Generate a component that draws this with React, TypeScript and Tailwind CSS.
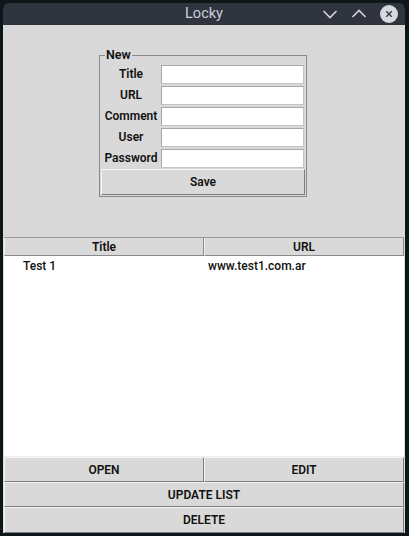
const fields = ["Title", "URL", "Comment", "User", "Password"];

const rows = [{ title: "Test 1", url: "www.test1.com.ar" }];

const raised =
  "bg-[#d9d9d9] border border-t-[#f4f4f4] border-l-[#f4f4f4] border-b-[#7d7d7d] border-r-[#7d7d7d]";

function Chevron({ up }: { up?: boolean }) {
  return (
    <svg width="16" height="16" viewBox="0 0 16 16" fill="none">
      <polyline
        points={up ? "1.5,11 8,4.5 14.5,11" : "1.5,5 8,11.5 14.5,5"}
        stroke="#d4d7dd"
        strokeWidth="1.6"
      />
    </svg>
  );
}

export default function App() {
  return (
    <div
      className="w-[409px] h-[536px] bg-[#0d1619] pt-[3px] px-[3px] overflow-hidden"
      style={{ fontFamily: "Roboto, 'Liberation Sans', sans-serif" }}
    >
      <div className="w-[402px] h-[530px] flex flex-col">
        {/* title bar */}
        <div className="h-[22px] bg-[#2f343f] rounded-t-[6px] relative flex items-center justify-center">
          <span className="text-[14.5px] text-[#cdd1d8]">Locky</span>
          <div className="absolute right-[7px] top-[2px] flex items-center gap-[13px]">
            <Chevron />
            <Chevron up />
            <svg width="18" height="18" viewBox="0 0 18 18">
              <circle cx="9" cy="9" r="9" fill="#d6d9e0" />
              <path d="M6.3 6.3 L11.7 11.7 M11.7 6.3 L6.3 11.7" stroke="#2f343f" strokeWidth="1.3" />
            </svg>
          </div>
        </div>

        {/* body */}
        <div className="flex-1 bg-[#d9d9d9] flex flex-col text-[12px] font-semibold text-[#111]">
          <div className="h-[212px] flex justify-center items-start pt-[23px] pr-[2px]">
            <fieldset className="w-[208px] border border-[#8a8a8a] px-px pb-px flex flex-col">
              <legend className="ml-[4px] px-px leading-[14px] text-[12.5px]">New</legend>
              <div className="flex flex-col gap-[3px] pt-[3px]">
                {fields.map((f) => (
                  <div key={f} className="flex items-center h-[18px]">
                    <span className="w-[60px] text-center">{f}</span>
                    <div className="flex-1 h-[19px] bg-white border border-[#c4c4c4] border-t-[#a8a8a8] border-l-[#a8a8a8] mr-px"></div>
                  </div>
                ))}
              </div>
              <button className={`${raised} mt-[2px] h-[26px] w-full text-[12px] font-semibold`}>
                Save
              </button>
            </fieldset>
          </div>

          {/* tree */}
          <div className="flex-1 flex flex-col px-px">
            <div className="flex h-[19px] border-t border-[#9c9c9c]">
              <div className="flex-1 flex items-center justify-center border-r border-b border-[#8a8a8a] border-l border-l-[#f2f2f2]">
                Title
              </div>
              <div className="flex-1 flex items-center justify-center border-r border-b border-[#8a8a8a] border-l border-l-[#f2f2f2]">
                URL
              </div>
            </div>
            <div className="flex-1 bg-white font-medium text-[12px]">
              {rows.map((r) => (
                <div key={r.title} className="flex h-[20px] items-center">
                  <span className="w-[200px] pl-[19px]">{r.title}</span>
                  <span className="pl-[4px]">{r.url}</span>
                </div>
              ))}
            </div>
          </div>

          {/* buttons */}
          <div className="flex flex-col px-px">
            <div className="flex h-[26px] border-t border-[#eeeeee]">
              <button className={`${raised} flex-1 font-semibold`}>OPEN</button>
              <button className={`${raised} flex-1 font-semibold`}>EDIT</button>
            </div>
            <button className={`${raised} h-[25px] font-semibold`}>UPDATE LIST</button>
            <button className={`${raised} h-[26px] font-semibold`}>DELETE</button>
          </div>
        </div>
      </div>
    </div>
  );
}
